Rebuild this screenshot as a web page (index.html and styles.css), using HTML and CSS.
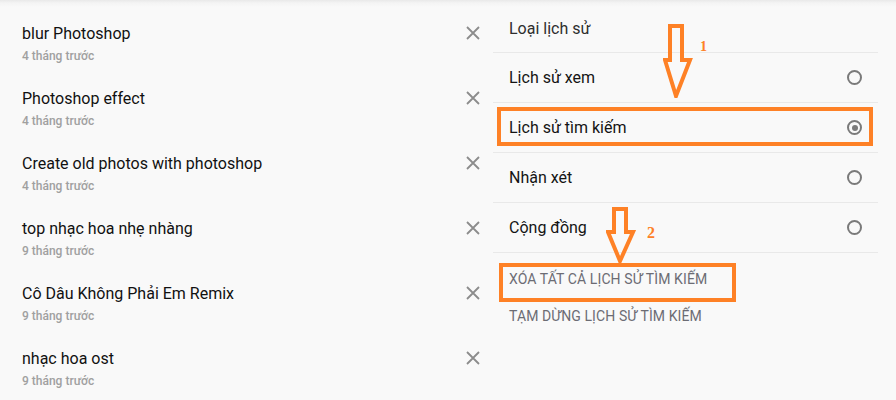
FILE: index.html
```html
<!DOCTYPE html>
<html lang="vi">
<head>
<meta charset="utf-8">
<title>Lịch sử tìm kiếm</title>
<link rel="stylesheet" href="styles.css">
</head>
<body>
<div class="page">
  <ul class="history">
    <li class="item">
      <div class="item-text"><div class="title">blur Photoshop</div><div class="date">4 tháng trước</div></div>
      <button class="remove" aria-label="Xóa"><svg viewBox="0 0 14 14" width="14" height="14"><path d="M1 1L13 13M13 1L1 13"/></svg></button>
    </li>
    <li class="item">
      <div class="item-text"><div class="title">Photoshop effect</div><div class="date">4 tháng trước</div></div>
      <button class="remove" aria-label="Xóa"><svg viewBox="0 0 14 14" width="14" height="14"><path d="M1 1L13 13M13 1L1 13"/></svg></button>
    </li>
    <li class="item">
      <div class="item-text"><div class="title">Create old photos with photoshop</div><div class="date">4 tháng trước</div></div>
      <button class="remove" aria-label="Xóa"><svg viewBox="0 0 14 14" width="14" height="14"><path d="M1 1L13 13M13 1L1 13"/></svg></button>
    </li>
    <li class="item">
      <div class="item-text"><div class="title">top nhạc hoa nhẹ nhàng</div><div class="date">9 tháng trước</div></div>
      <button class="remove" aria-label="Xóa"><svg viewBox="0 0 14 14" width="14" height="14"><path d="M1 1L13 13M13 1L1 13"/></svg></button>
    </li>
    <li class="item">
      <div class="item-text"><div class="title">Cô Dâu Không Phải Em Remix</div><div class="date">9 tháng trước</div></div>
      <button class="remove" aria-label="Xóa"><svg viewBox="0 0 14 14" width="14" height="14"><path d="M1 1L13 13M13 1L1 13"/></svg></button>
    </li>
    <li class="item">
      <div class="item-text"><div class="title">nhạc hoa ost</div><div class="date">9 tháng trước</div></div>
      <button class="remove" aria-label="Xóa"><svg viewBox="0 0 14 14" width="14" height="14"><path d="M1 1L13 13M13 1L1 13"/></svg></button>
    </li>
  </ul>

  <aside class="panel">
    <div class="panel-head">Loại lịch sử</div>
    <div class="option"><span>Lịch sử xem</span><span class="radio"></span></div>
    <div class="option"><span>Lịch sử tìm kiếm</span><span class="radio checked"></span></div>
    <div class="option"><span>Nhận xét</span><span class="radio"></span></div>
    <div class="option"><span>Cộng đồng</span><span class="radio"></span></div>
    <div class="actions">
      <div class="action first">XÓA TẤT CẢ LỊCH SỬ TÌM KIẾM</div>
      <div class="action">TẠM DỪNG LỊCH SỬ TÌM KIẾM</div>
    </div>

    <div class="mark box1"></div>
    <div class="mark box2"></div>
    <svg class="mark arrow1" viewBox="0 0 30 74" width="30" height="74"><path d="M7 2H19V36H27L13 72L2 36H7Z"/></svg>
    <svg class="mark arrow2" viewBox="0 0 30 56" width="30" height="56"><path d="M8 2H20V25H27L14 54L2 25H8Z"/></svg>
    <span class="mark num num1">1</span>
    <span class="mark num num2">2</span>
  </aside>
</div>
</body>
</html>
```

FILE: styles.css
```css
html, body {
  margin: 0;
  padding: 0;
}
body {
  width: 896px;
  height: 400px;
  overflow: hidden;
  background: #f9f9f9;
  font-family: Roboto, "Noto Sans", Arial, sans-serif;
  color: #1b1b1b;
}
.page {
  display: flex;
  height: 400px;
  background: linear-gradient(#e9e9e9 0px, #f4f4f4 3px, #f9f9f9 7px, #f9f9f9 100%);
}
.history {
  list-style: none;
  margin: 0;
  padding: 24px 13px 0 22px;
  width: 458px;
}
.item {
  display: flex;
  align-items: flex-start;
  justify-content: space-between;
  height: 65px;
}
.title {
  font-size: 16px;
  font-weight: 400;
  line-height: 20px;
  color: #111;
}
.date {
  margin-top: 4px;
  font-size: 12px;
  font-weight: 500;
  line-height: 16px;
  color: #a0a0a0;
}
.remove {
  border: 0;
  padding: 0;
  margin-top: 2px;
  background: none;
  width: 14px;
  height: 14px;
  display: block;
}
.remove svg {
  display: block;
}
.remove path {
  stroke: #8c8c8c;
  stroke-width: 1.8;
  fill: none;
}
.panel {
  position: relative;
  width: 385px;
}
.panel-head {
  height: 53px;
  padding-left: 16px;
  padding-top: 5px;
  display: flex;
  align-items: center;
  box-sizing: border-box;
  font-size: 16px;
  color: #2e2e2e;
  border-bottom: 1px solid #e9e9e9;
}
.option {
  display: flex;
  align-items: center;
  justify-content: space-between;
  height: 50px;
  box-sizing: border-box;
  padding: 0 16px;
  border-bottom: 1px solid #e9e9e9;
  font-size: 16px;
  font-weight: 400;
  color: #141414;
}
.radio {
  width: 15px;
  height: 15px;
  border: 2px solid #7a7a7a;
  border-radius: 50%;
  box-sizing: border-box;
  position: relative;
}
.radio.checked::after {
  content: "";
  position: absolute;
  left: 2.5px;
  top: 2.5px;
  width: 6px;
  height: 6px;
  border-radius: 50%;
  background: #7a7a7a;
}
.actions {
  padding: 16px 16px 0;
}
.action {
  font-size: 14px;
  line-height: 20px;
  color: #6c6c74;
  letter-spacing: 0.1px;
}
.action + .action {
  margin-top: 17px;
}
.mark {
  position: absolute;
}
.box1 {
  left: 4px;
  top: 107px;
  width: 376px;
  height: 39px;
  border: 4px solid #fe8126;
  box-sizing: border-box;
}
.box2 {
  left: 6px;
  top: 263px;
  width: 237px;
  height: 39px;
  border: 4px solid #fe8126;
  box-sizing: border-box;
}
.arrow1 {
  left: 170px;
  top: 24px;
}
.arrow2 {
  left: 113px;
  top: 207px;
}
.arrow1 path, .arrow2 path {
  fill: none;
  stroke: #fe8126;
  stroke-width: 4;
  stroke-linejoin: miter;
}
.num {
  font-family: "Liberation Serif", "DejaVu Serif", serif;
  font-weight: bold;
  color: #fe8126;
  line-height: 1;
}
.num1 {
  left: 207px;
  top: 40px;
  font-size: 14px;
}
.num2 {
  left: 154px;
  top: 225px;
  font-size: 16px;
}
```
